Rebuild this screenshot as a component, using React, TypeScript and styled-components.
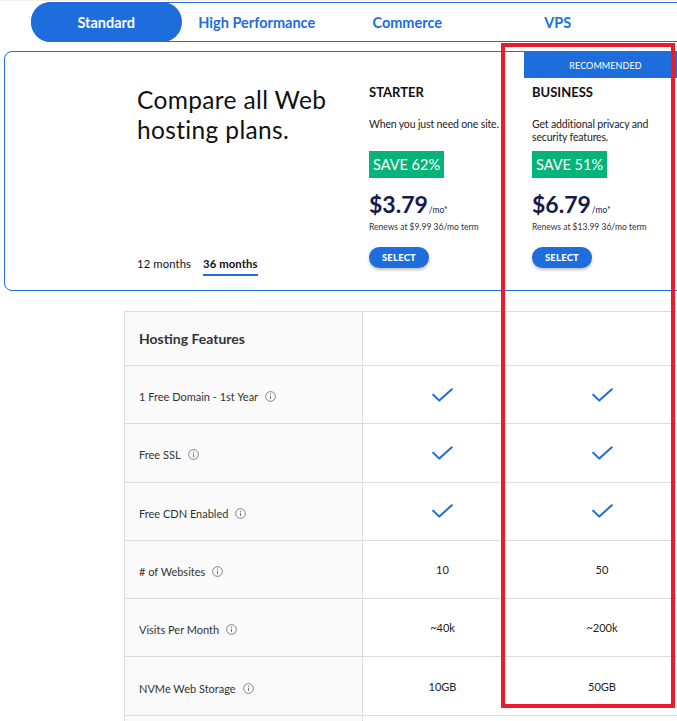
import styled, { createGlobalStyle } from 'styled-components';

const GlobalStyle = createGlobalStyle`
  html, body {
    margin: 0;
    padding: 0;
    background: #fff;
    overflow: hidden;
  }
  body {
    font-family: Lato, 'Open Sans', 'Liberation Sans', sans-serif;
    color: #222;
  }
`;

const BLUE = '#1d6ddc';

const tabs = ['Standard', 'High Performance', 'Commerce', 'VPS'];

const plans = [
  {
    name: 'STARTER',
    desc: 'When you just need one site.',
    save: 'SAVE 62%',
    price: '$3.79',
    renew: 'Renews at $9.99 36/mo term',
    recommended: false,
  },
  {
    name: 'BUSINESS',
    desc: 'Get additional privacy and security features.',
    save: 'SAVE 51%',
    price: '$6.79',
    renew: 'Renews at $13.99 36/mo term',
    recommended: true,
  },
];

type Value = boolean | string;

const features: { label: string; starter: Value; business: Value }[] = [
  { label: '1 Free Domain - 1st Year', starter: true, business: true },
  { label: 'Free SSL', starter: true, business: true },
  { label: 'Free CDN Enabled', starter: true, business: true },
  { label: '# of Websites', starter: '10', business: '50' },
  { label: 'Visits Per Month', starter: '~40k', business: '~200k' },
  { label: 'NVMe Web Storage', starter: '10GB', business: '50GB' },
];

const InfoIcon = () => (
  <svg width='11' height='11' viewBox='0 0 12 12' fill='none'>
    <circle cx='6' cy='6' r='5.3' stroke='#777' strokeWidth='1' />
    <line x1='6' y1='5.2' x2='6' y2='8.8' stroke='#777' strokeWidth='1.1' />
    <circle cx='6' cy='3.5' r='0.7' fill='#777' />
  </svg>
);

const Check = () => (
  <svg width='21' height='14' viewBox='0 0 21 14' fill='none'>
    <polyline
      points='1.2,6.8 7.3,12.6 19.8,1.2'
      stroke={BLUE}
      strokeWidth='2'
      strokeLinecap='round'
      strokeLinejoin='round'
    />
  </svg>
);

const renderValue = (v: Value) => (v === true ? <Check /> : v);

export default function App() {
  return (
    <>
      <GlobalStyle />
      <SPage>
        <STabBar>
          {tabs.map((t, i) => (
            <STab key={t} $active={i === 0}>
              {t}
            </STab>
          ))}
        </STabBar>

        <SCard>
          <SIntro>
            <STitle>Compare all Web hosting plans.</STitle>
            <STerms>
              <STerm>12 months</STerm>
              <STerm $active>36 months</STerm>
            </STerms>
          </SIntro>
          {plans.map((p) => (
            <SPlan key={p.name}>
              <SBannerSlot>
                {p.recommended && <SBanner>RECOMMENDED</SBanner>}
              </SBannerSlot>
              <SPlanBody>
                <SPlanName>{p.name}</SPlanName>
                <SPlanDesc>{p.desc}</SPlanDesc>
                <SSave>{p.save}</SSave>
                <SPrice>
                  {p.price}
                  <SPer>/mo*</SPer>
                </SPrice>
                <SRenew>{p.renew}</SRenew>
                <SSelect>SELECT</SSelect>
              </SPlanBody>
            </SPlan>
          ))}
        </SCard>

        <STable>
          <SRow $head>
            <SFeatureCell $head>Hosting Features</SFeatureCell>
            <SValueCell />
            <SValueCell />
          </SRow>
          {features.map((f) => (
            <SRow key={f.label}>
              <SFeatureCell>
                {f.label}
                <InfoIcon />
              </SFeatureCell>
              <SValueCell>{renderValue(f.starter)}</SValueCell>
              <SValueCell>{renderValue(f.business)}</SValueCell>
            </SRow>
          ))}
          <SRow>
            <SFeatureCell />
            <SValueCell />
            <SValueCell />
          </SRow>
        </STable>

        <SHighlight />
      </SPage>
    </>
  );
}

const SPage = styled.div`
  position: relative;
  width: 677px;
  height: 721px;
  overflow: hidden;
  border-top: 1px solid #f6eee6;
  box-sizing: border-box;
`;

const STabBar = styled.div`
  display: flex;
  margin: 1px 0 0 31px;
  width: 700px;
  height: 40px;
  box-sizing: border-box;
  border: 1px solid ${BLUE};
  border-right: none;
  border-radius: 20px 0 0 20px;
`;

const STab = styled.div<{ $active?: boolean }>`
  flex: 0 0 150.5px;
  margin: ${(p) => (p.$active ? '-1px 0 -1px -1px' : '0')};
  display: flex;
  align-items: center;
  justify-content: center;
  border-radius: 20px;
  font-size: 14.5px;
  font-weight: 700;
  color: ${(p) => (p.$active ? '#fff' : BLUE)};
  background: ${(p) => (p.$active ? BLUE : 'transparent')};
`;

const SCard = styled.div`
  display: flex;
  margin: 9px 0 0 4px;
  width: 760px;
  height: 240px;
  box-sizing: border-box;
  border: 1px solid ${BLUE};
  border-radius: 8px;
`;

const SIntro = styled.div`
  flex: 0 0 356px;
  box-sizing: border-box;
  padding: 33px 0 14px 132px;
  display: flex;
  flex-direction: column;
  justify-content: space-between;
`;

const STitle = styled.h1`
  margin: 0;
  width: 215px;
  font-size: 24.5px;
  line-height: 30px;
  letter-spacing: 0.35px;
  font-weight: 400;
  color: #111;
`;

const STerms = styled.div`
  display: flex;
  gap: 12px;
`;

const STerm = styled.span<{ $active?: boolean }>`
  font-size: 11.3px;
  line-height: 14px;
  padding-bottom: 3px;
  letter-spacing: 0.1px;
  font-weight: ${(p) => (p.$active ? 700 : 400)};
  color: #111;
  border-bottom: 2px solid ${(p) => (p.$active ? BLUE : 'transparent')};
`;

const SPlan = styled.div`
  flex: 0 0 163px;
  display: flex;
  flex-direction: column;
`;

const SBannerSlot = styled.div`
  height: 26px;
`;

const SBanner = styled.div`
  height: 100%;
  background: ${BLUE};
  color: #fff;
  font-size: 9px;
  display: flex;
  align-items: center;
  justify-content: center;
  letter-spacing: 0.01em;
`;

const SPlanBody = styled.div`
  padding: 6px 0 0 8px;
  display: flex;
  flex-direction: column;
  align-items: flex-start;
`;

const SPlanName = styled.div`
  font-size: 13px;
  line-height: 16px;
  font-weight: 700;
  color: #111;
`;

const SPlanDesc = styled.div`
  margin-top: 18px;
  height: 28px;
  width: 152px;
  font-size: 10.5px;
  line-height: 13px;
  letter-spacing: -0.15px;
  color: #222;
`;

const SSave = styled.div`
  margin-top: 5px;
  height: 27px;
  padding: 0 4px;
  display: flex;
  align-items: center;
  background: #06b37a;
  color: #fff;
  font-size: 14.5px;
`;

const SPrice = styled.div`
  margin-top: 13px;
  font-size: 23px;
  line-height: 26px;
  font-weight: 700;
  color: #141a4c;
  display: flex;
  align-items: baseline;
`;

const SPer = styled.span`
  font-size: 8.5px;
  font-weight: 400;
  margin-left: 1px;
`;

const SRenew = styled.div`
  margin-top: -1px;
  font-size: 8.5px;
  line-height: 11px;
  color: #333;
`;

const SSelect = styled.button`
  margin-top: 14px;
  width: 60px;
  height: 21px;
  border: none;
  border-radius: 11px;
  background: ${BLUE};
  color: #fff;
  font-family: inherit;
  font-size: 9.5px;
  font-weight: 900;
  letter-spacing: 0.02em;
  box-shadow: 0 2px 3px rgba(0, 0, 0, 0.25);
  padding: 0;
`;

const STable = styled.div`
  margin: 20px 0 0 124px;
  width: 620px;
  border-top: 1px solid #ddd;
  border-left: 1px solid #ddd;
`;

const SRow = styled.div<{ $head?: boolean }>`
  display: grid;
  grid-template-columns: 238px 159px 160px 1fr;
  height: ${(p) => (p.$head ? '54px' : '58.3px')};
  box-sizing: border-box;
  border-bottom: 1px solid #ddd;
`;

const SFeatureCell = styled.div<{ $head?: boolean }>`
  display: flex;
  align-items: center;
  gap: 7px;
  padding-left: 14px;
  background: #fafafa;
  border-right: 1px solid #ddd;
  font-size: ${(p) => (p.$head ? '14px' : '11px')};
  font-weight: ${(p) => (p.$head ? 700 : 400)};
  color: #333;
  padding-top: ${(p) => (p.$head ? '0' : '4px')};
`;

const SValueCell = styled.div`
  display: flex;
  align-items: center;
  justify-content: center;
  font-size: 11px;
  color: #222;
`;

const SHighlight = styled.div`
  position: absolute;
  left: 501px;
  top: 42px;
  width: 174px;
  height: 665px;
  box-sizing: border-box;
  border: 4.5px solid #e81c2a;
  pointer-events: none;
`;
